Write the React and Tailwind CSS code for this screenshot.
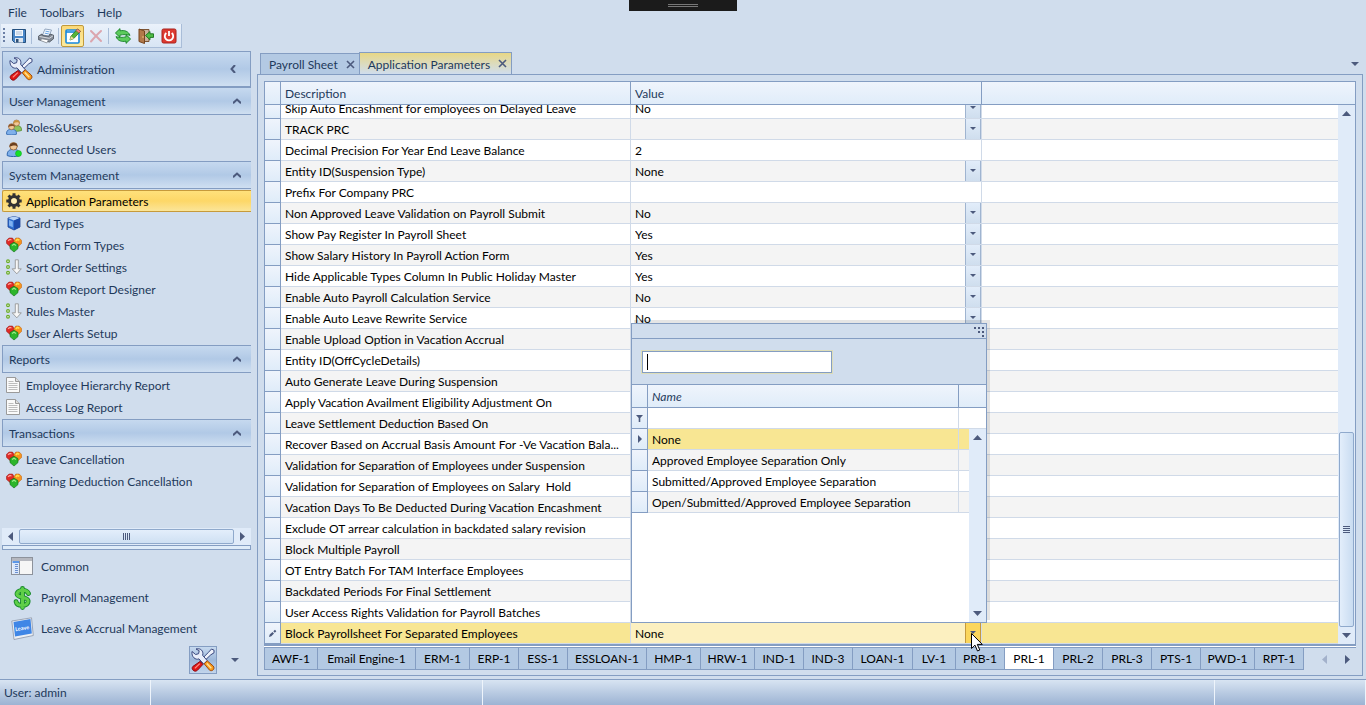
import React, { useState } from "react";

function Svg({ w = 16, h = 16, box, children, className = "" }) {
  return (
    <svg width={w} height={h} viewBox={box || `0 0 ${w} ${h}`} className={`shrink-0 ${className}`} aria-hidden="true">
      {children}
    </svg>
  );
}

const Down = ({ w = 6, h = 4, className = "" }) => (
  <Svg w={w} h={h} className={className}>
    <path d={`M0 0H${w}L${w / 2} ${h}Z`} fill="#4c5a7d" />
  </Svg>
);
const Up = () => (
  <Svg w={9} h={5}>
    <path d="M0 5H9L4.500 0Z" fill="#4c5a7d" />
  </Svg>
);
const Side = ({ left, faded }) => (
  <Svg w={5} h={9}>
    <path d={left ? "M5 0V9L0 4.5Z" : "M0 0V9L5 4.5Z"} fill={faded ? "#a3b1cb" : "#4c5a7d"} />
  </Svg>
);

const ToolsIcon = () => (
  <Svg w={24} h={24}>
    <path d="M20.500 1l2.500 1.200v2.600l-3.200 2L11 15.200 8.800 13l8.600-8.600z" fill="#eef2fb" stroke="#39477e" />
    <path d="M1 3.500l3.600 3 3-.8.6-3L5 1c3.500-1 6.800.8 6.900 4.500l-.2 1.900 4.500 5.200-3.500 3.400-4.700-5.100C4.500 12.300.3 9 1 3.500z" fill="#e9eefa" stroke="#39477e" />
    <path d="M13.200 15.800l3-3 6 5.200c2.200 2.500-.8 6-3.600 4.200z" fill="#f89c1c" stroke="#a24a0c" />
    <path d="M15.800 15.500l4.500 4.700" stroke="#ffe29a" strokeWidth="1.500" />
    <path d="M9 13.500l3 2.800-5.600 6C3.500 24.800-.3 21.200 1.800 18.500z" fill="#e01515" stroke="#8c0c12" />
    <path d="M8.800 15.600l-5 4.800" stroke="#ff8f85" strokeWidth="1.300" />
  </Svg>
);
const SaveIcon = () => (
  <Svg>
    <path d="M1.500 1.500h13v13h-11l-2-2z" fill="#4a87c8" stroke="#24507f" />
    <rect x="4" y="2" width="8" height="6" fill="#f4f8fd" />
    <path d="M5 4h6M5 6h6" stroke="#a9bed6" />
    <rect x="4" y="10" width="8" height="4.500" fill="#dfe6ee" />
    <rect x="5" y="11" width="2.500" height="3.500" fill="#2d5078" />
  </Svg>
);
const PrintIcon = () => (
  <Svg>
    <path d="M7 1l6.500 1L11 8 4.500 7z" fill="#f3f8ff" stroke="#7d93ae" strokeWidth=".8" />
    <path d="M7.500 3.200l4 .7M6.800 5.200l4 .7" stroke="#6aa5e2" />
    <path d="M.6 8L4 6l.8 1.600 6 .8L12 6l3.500 1.200v3.600L11.500 14 .6 11.800z" fill="#858c97" stroke="#454c56" strokeWidth=".8" />
    <path d="M1.500 8.500l9.800 1.800L15 7.800" fill="none" stroke="#d5d9df" />
    <path d="M2 12.300l2-1.500 6.500 1.100-1.700 3z" fill="#fff" stroke="#707883" strokeWidth=".7" />
  </Svg>
);
const EditIcon = () => (
  <Svg>
    <rect x="1" y="2" width="13" height="13" rx="1" fill="#fff" stroke="#1788dd" strokeWidth="1.600" />
    <path d="M1 4h13" stroke="#1788dd" strokeWidth="1.600" />
    <path d="M12.500 1l3 2.300-6.700 7.200-3.800 1.500 1-3.800z" fill="#57b53a" stroke="#2c7a20" strokeWidth=".8" />
    <path d="M12.500 1l3 2.300-1.500 1.700-3-2.400z" fill="#f08b85" stroke="#b84b42" strokeWidth=".6" />
    <path d="M6 8.200L9 10.500 5 12z" fill="#f4d79c" />
  </Svg>
);
const CloseIcon = () => (
  <Svg>
    <path d="M3 3c3 3 6 6 10 10M13 3C9 6.500 6 10 3 13.500" stroke="#dba5ae" strokeWidth="2" fill="none" strokeLinecap="round" />
  </Svg>
);
const RefreshIcon = () => (
  <Svg>
    <path d="M.4 5L5 .6v2.200c4.500-.9 8.500.5 10 4.600-1.500-.7-3-.8-4.500-.8-2 0-3.500.1-5.500.5V9.400z" fill="#5ccb5c" stroke="#168127" strokeWidth=".9" strokeLinejoin="round" />
    <path d="M15.600 11L11 15.400v-2.200C6.500 14.100 2.500 12.700 1 8.600c1.500.7 3 .8 4.500.8 2 0 3.500-.1 5.500-.5V6.600z" fill="#5ccb5c" stroke="#168127" strokeWidth=".9" strokeLinejoin="round" />
  </Svg>
);
const ExitIcon = () => (
  <Svg>
    <path d="M1 1.500h10v12H7" fill="#c9b19a" stroke="#7c5434" />
    <path d="M1 1l5.500 2v12.500L1 13.500z" fill="#b27849" stroke="#75451f" />
    <circle cx="5" cy="9" r=".7" fill="#ffdf8e" />
    <path d="M7.500 7.500l4.500-4v2.300h3.500v3.600H12v2.400z" fill="#4fbd45" stroke="#18701c" strokeWidth=".9" />
  </Svg>
);
const PowerIcon = () => (
  <Svg>
    <rect x="1" y="1" width="14" height="14" rx="1.500" fill="#dd3a31" stroke="#a9211c" />
    <path d="M5.300 5a4.200 4.200 0 1 0 5.400 0" stroke="#fff" strokeWidth="1.800" fill="none" />
    <path d="M8 3v5" stroke="#fff" strokeWidth="1.800" />
  </Svg>
);

const Person = ({ x, y, shirt, edge, hair }) => (
  <g transform={`translate(${x} ${y})`}>
    <path d="M0 11c-.3-3.500 1.500-5 5-5s5.300 1.500 5 5c-3 1-7 1-10 0z" fill={shirt} stroke={edge} strokeWidth=".8" />
    <circle cx="5" cy="3.500" r="3" fill="#f1c898" stroke="#8b5a2b" strokeWidth=".6" />
    <path d="M1.800 4C1.300 0 8.700-.8 8.200 4 7 2.300 4 2.600 1.800 4z" fill={hair} />
  </g>
);
const UsersIcon = () => (
  <Svg>
    <Person x={5.500} y={0.500} shirt="#8fc35c" edge="#51892b" hair="#c9923a" />
    <Person x={0.500} y={4.200} shirt="#7fb0ea" edge="#2c65ad" hair="#8a5129" />
  </Svg>
);
const ConnectedIcon = () => (
  <Svg>
    <g transform="scale(1.250)">
      <Person x={1} y={0.700} shirt="#7fb0ea" edge="#2c65ad" hair="#6b3f1e" />
    </g>
    <circle cx="12.500" cy="12.500" r="3" fill="#14e028" stroke="#0ba51b" strokeWidth=".5" />
  </Svg>
);
const GearIcon = () => (
  <Svg>
    <g fill="none" stroke="#333">
      <circle cx="8" cy="8" r="4.400" strokeWidth="3.200" />
      <path d="M8 .3v3M8 12.700v3M.3 8h3M12.700 8h3M2.500 2.500l2.300 2.300M11.200 11.200l2.300 2.300M13.500 2.500l-2.300 2.300M4.800 11.200l-2.300 2.300" strokeWidth="3" />
    </g>
    <circle cx="8" cy="8" r="2.800" fill="#fff0b8" />
  </Svg>
);
const CubeIcon = () => (
  <Svg>
    <path d="M8 1.500l6 1.500v9l-6 3-6-3V3z" fill="#2f6fd0" stroke="#1b3f93" strokeWidth=".8" />
    <path d="M2 3l6-1.500L14 3 8 5.500z" fill="#b9d4f6" />
    <path d="M8 5.500L14 3v9l-6 3z" fill="#1c49a8" />
    <path d="M3 5l3.800 1.600v5.600L3 10.500z" fill="#7fb0f0" />
  </Svg>
);
const GemsIcon = () => (
  <Svg>
    <path d="M.3 3.500L3 1h3.500L8.400 4l-1 4.500L4 9.500.6 6.500z" fill="#e02a26" stroke="#8f1512" strokeWidth=".5" />
    <path d="M15.700 3.500L13.200 1H9.800L7.800 4l1 4.500 3.500 1 3.200-3z" fill="#f7941d" stroke="#b85a08" strokeWidth=".5" />
    <path d="M4 7.600L8 5.200l4 2.400v4L8 15l-4-3.400z" fill="#2db52b" stroke="#0c6a12" strokeWidth=".6" />
    <path d="M2 3.700l2-1.300 1.500.6" stroke="#ffa59d" strokeWidth="1.200" fill="none" />
    <path d="M9.800 4l1.500-1.500 2 .7" stroke="#ffe04a" strokeWidth="1.600" fill="none" />
    <path d="M6 8.500l2-1.300 2 1.300" stroke="#9bed88" strokeWidth="1.200" fill="none" />
  </Svg>
);
const SortIcon = () => (
  <Svg>
    <g fill="#e7f5d8" stroke="#6bab2a" strokeWidth="1.200">
      <circle cx="2" cy="2.300" r="1.400" />
      <circle cx="2" cy="8" r="1.400" />
      <circle cx="2" cy="13.700" r="1.400" />
    </g>
    <path d="M9.300.8h3v9h3l-4.500 5-4.600-5h3.100z" fill="#f7f7f7" stroke="#8d8d8d" strokeWidth=".8" />
  </Svg>
);
const DocIcon = () => (
  <Svg>
    <path d="M.5.5h9l4 4v11H.5z" fill="#fafafa" stroke="#9a9a9a" />
    <path d="M9.500.5v4h4" fill="#ddd" stroke="#9a9a9a" />
    <path d="M2.500 4.500h5M2.500 6.500h9M2.500 8.500h9M2.500 10.500h9M2.500 12.500h9" stroke="#bdbdbd" />
  </Svg>
);
const CommonIcon = () => (
  <Svg w={24} h={24}>
    <rect x=".5" y="2.500" width="21" height="17" fill="#f6f6f6" stroke="#8d929b" />
    <rect x="1" y="3" width="20" height="3" fill="#b6b8bf" />
    <rect x="1.500" y="6.500" width="7" height="12.500" fill="#dbe8fb" />
    <path d="M1.500 7h7" stroke="#2f7be0" strokeWidth="1.500" />
    <path d="M4 9.500h3M4 11.500h3M4 13.500h3M4 15.500h3M4 17.500h3" stroke="#6b8fd0" />
    <path d="M8.500 6v13.500" stroke="#8d929b" />
  </Svg>
);
const DollarIcon = () => (
  <Svg w={24} h={24}>
    <g fill="none" strokeLinecap="round">
      <path d="M17.500 7.500c-1-2.500-3.500-3.300-6.200-3.200-3.200.1-5.700 2-5.200 4.300.6 3 10.500 2.500 11 6 .4 3.200-2.500 4.900-6 4.800-3 0-5.500-1.200-6-3.700M11.500 2.400v19.200" stroke="#178a2b" strokeWidth="4.800" />
      <path d="M17.500 7.500c-1-2.500-3.500-3.300-6.200-3.200-3.200.1-5.700 2-5.200 4.300.6 3 10.500 2.500 11 6 .4 3.200-2.500 4.900-6 4.800-3 0-5.500-1.200-6-3.700M11.500 2.400v19.200" stroke="#5fcf48" strokeWidth="3" />
    </g>
  </Svg>
);
const LeaveIcon = () => (
  <Svg w={24} h={24}>
    <path d="M.8 4L20.500.8l1.800 17.700L3 22.500z" fill="#eceff4" stroke="#8b96a8" strokeWidth=".8" />
    <path d="M2.500 5l17-3 1.300 14.500-16.800 3z" fill="#3f86e6" />
    <text x="4.200" y="13" fontSize="5.500" fontWeight="700" fill="#fff" fontFamily="Lato, sans-serif" transform="rotate(-9 12 12)">Leave</text>
  </Svg>
);

const sections = [
  ["User Management", [[UsersIcon, "Roles&Users"], [ConnectedIcon, "Connected Users"]]],
  ["System Management", [
    [GearIcon, "Application Parameters"],
    [CubeIcon, "Card Types"],
    [GemsIcon, "Action Form Types"],
    [SortIcon, "Sort Order Settings"],
    [GemsIcon, "Custom Report Designer"],
    [SortIcon, "Rules Master"],
    [GemsIcon, "User Alerts Setup"],
  ]],
  ["Reports", [[DocIcon, "Employee Hierarchy Report"], [DocIcon, "Access Log Report"]]],
  ["Transactions", [[GemsIcon, "Leave Cancellation"], [GemsIcon, "Earning Deduction Cancellation"]]],
];

const rows = [
  ["Skip Auto Encashment for employees on Delayed Leave", "No", "list"],
  ["TRACK PRC", "", "list"],
  ["Decimal Precision For Year End Leave Balance", "2", "text"],
  ["Entity ID(Suspension Type)", "None", "list"],
  ["Prefix For Company PRC", "", "text"],
  ["Non Approved Leave Validation on Payroll Submit", "No", "list"],
  ["Show Pay Register In Payroll Sheet", "Yes", "list"],
  ["Show Salary History In Payroll Action Form", "Yes", "list"],
  ["Hide Applicable Types Column In Public Holiday Master", "Yes", "list"],
  ["Enable Auto Payroll Calculation Service", "No", "list"],
  ["Enable Auto Leave Rewrite Service", "No", "list"],
  ["Enable Upload Option in Vacation Accrual"],
  ["Entity ID(OffCycleDetails)"],
  ["Auto Generate Leave During Suspension"],
  ["Apply Vacation Availment Eligibility Adjustment On"],
  ["Leave Settlement Deduction Based On"],
  ["Recover Based on Accrual Basis Amount For -Ve Vacation Bala..."],
  ["Validation for Separation of Employees under Suspension"],
  ["Validation for Separation of Employees on Salary\u00a0 Hold"],
  ["Vacation Days To Be Deducted During Vacation Encashment"],
  ["Exclude OT arrear calculation in backdated salary revision"],
  ["Block Multiple Payroll"],
  ["OT Entry Batch For TAM Interface Employees"],
  ["Backdated Periods For Final Settlement"],
  ["User Access Rights Validation for Payroll Batches"],
  ["Block Payrollsheet For Separated Employees", "None", "list"],
];

const choices = ["None", "Approved Employee Separation Only", "Submitted/Approved Employee Separation", "Open/Submitted/Approved Employee Separation"];

const narrow = "w-[49px]";
const medium = "w-[54px]";
const sheets = [
  ["AWF-1", medium],
  ["Email Engine-1", "w-[98px]"],
  ["ERM-1", medium],
  ["ERP-1", narrow],
  ["ESS-1", narrow],
  ["ESSLOAN-1", "w-[79px]"],
  ["HMP-1", medium],
  ["HRW-1", medium],
  ["IND-1", narrow],
  ["IND-3", narrow],
  ["LOAN-1", "w-[60px]"],
  ["LV-1", "w-[43px]"],
  ["PRB-1", narrow],
  ["PRL-1", narrow],
  ["PRL-2", narrow],
  ["PRL-3", narrow],
  ["PTS-1", narrow],
  ["PWD-1", medium],
  ["RPT-1", narrow],
];

const headGrad = "bg-linear-to-b from-[#eff4fc] to-[#dfecf9]";
const barGrad = "bg-linear-to-b from-[#c6d9ef] via-[#b1c9e6] to-[#cfdff1]";

function ToolButton({ label, on, children }) {
  return (
    <button
      aria-label={label}
      className={`flex h-[22px] w-[23px] items-center justify-center ${on ? "rounded-xs border border-[#c09a3c] bg-linear-to-b from-[#fbd978] to-[#fdeb9e]" : ""}`}
    >
      {children}
    </button>
  );
}
const ToolSep = () => <span className="mr-[2px] ml-px h-4 w-px bg-[#a9bdd8]" />;

function Sidebar() {
  return (
    <nav className="ml-[2px] flex w-[249px] shrink-0 flex-col" aria-label="Modules">
      <div className={`mt-[3px] flex h-9 items-center border border-[#849dc2] pr-[14px] pl-[6px] ${barGrad}`}>
        <ToolsIcon />
        <span className="ml-1 grow pt-[2px]">Administration</span>
        <button aria-label="Collapse">
          <Svg w={6} h={8}>
            <path d="M5 0L1.500 4 5 8" fill="none" stroke="#4c5a7d" strokeWidth="2" />
          </Svg>
        </button>
      </div>
      {sections.map(([title, items]) => (
        <section key={title} className="pb-px">
          <button className={`mb-px flex h-7 w-full items-center justify-between border-y border-l border-[#849dc2] pr-[10px] pl-[6px] text-left ${barGrad}`}>
            <span className="pt-[2px]">{title}</span>
            <Svg w={8} h={6}>
              <path d="M0 5.200L4 1.500 8 5.200" fill="none" stroke="#4c5a7d" strokeWidth="2" />
            </Svg>
          </button>
          {items.map(([Icon, text]) => (
            <a
              key={text}
              href="#"
              className={`flex h-[22px] items-center gap-1 border-y border-l pl-[3px] ${
                text === "Application Parameters"
                  ? "rounded-l-xs border-[#c69a3b] bg-linear-to-b from-[#ffe17b] via-[#fdd767] to-[#fbe598] text-black"
                  : "border-transparent"
              }`}
            >
              <Icon />
              <span className="pt-[2px]">{text}</span>
            </a>
          ))}
        </section>
      ))}
      <div className="mt-auto flex h-[17px] items-center justify-between bg-[#e0ebf9] px-[6px]">
        <Side left />
        <div className="mx-[6px] flex h-[15px] grow items-center justify-center gap-px rounded-xs border border-[#8fa9cc] bg-linear-to-b from-[#e3eefb] to-[#cfe0f3]">
          {[0, 1, 2, 3].map((i) => (
            <span key={i} className="h-[7px] w-px bg-[#4c5a7d]" />
          ))}
        </div>
        <Side />
      </div>
      <div className="h-[5px] border border-[#849dc2] bg-[#dfecf9]" />
      {[[CommonIcon, "Common"], [DollarIcon, "Payroll Management"], [LeaveIcon, "Leave & Accrual Management"]].map(([Icon, text]) => (
        <a key={text} href="#" className="flex h-[31px] items-center gap-[6px] pt-[3px] pl-[9px]">
          <Icon />
          {text}
        </a>
      ))}
      <div className="mt-[3px] mb-[5px] flex h-7 items-center gap-[14px] pl-[187px]">
        <button aria-label="Administration" className="flex size-7 items-center justify-center border border-[#849dc2] bg-linear-to-b from-[#c6d9ef] via-[#9db8da] to-[#c2d5ec]">
          <ToolsIcon />
        </button>
        <button aria-label="Configure buttons">
          <Down w={8} h={4} />
        </button>
      </div>
    </nav>
  );
}

function ValueCell({ label, value, kind, active }) {
  if (!kind) return null;
  if (kind === "text") return <input aria-label={label} defaultValue={value} className="block h-full w-full bg-transparent pl-1 outline-none" />;
  return (
    <div className="grid h-full grid-cols-1">
      <select aria-label={label} defaultValue={value} className="col-start-1 row-start-1 h-full appearance-none bg-transparent pt-[2px] pl-1 outline-none">
        <option>{value}</option>
      </select>
      <span
        className={`pointer-events-none col-start-1 row-start-1 flex w-4 items-center justify-center justify-self-end border-x ${
          active ? "border-[#c69a3b] bg-[#fbd65c]" : "border-[#9fb4d0] bg-linear-to-b from-[#e2edfa] to-[#cfdeee]"
        }`}
      >
        <Down w={6} h={3} className="mb-[2px]" />
      </span>
    </div>
  );
}

function Popup() {
  const cell = "border-r border-b border-[#d0dae8] pt-[2px] pl-1 font-normal";
  const ind = `border-r border-b border-[#849dc2] ${headGrad}`;
  return (
    <div className="absolute bottom-[21px] left-[366px] flex h-[300px] w-[356px] flex-col border border-[#849dc2] bg-white text-black shadow-[3px_-3px_0_rgba(0,0,0,0.1)]">
      <div className="flex h-[15px] shrink-0 justify-end border-b border-[#849dc2] bg-[#d0dded] pt-[3px] pr-[2px]">
        <Svg w={10} h={10}>
          <path d="M0 0h2v2H0zM4 0h2v2H4zM8 0h2v2H8zM4 4h2v2H4zM8 4h2v2H8zM8 8h2v2H8z" fill="#4c5a7d" />
        </Svg>
      </div>
      <div className="flex h-[46px] shrink-0 items-center border-b border-[#849dc2] bg-[#d0dded] pl-[10px]">
        <div className="flex h-[22px] w-[190px] items-center border border-[#849dc2] bg-white px-1 outline-1 outline-[#ddddb8]">
          <span className="h-4 w-px bg-black" />
          <input aria-label="Search" className="h-full min-w-0 grow outline-none" />
        </div>
      </div>
      <table className="w-full table-fixed border-separate border-spacing-0">
        <colgroup>
          <col className="w-4" />
          <col />
          <col className="w-[27px]" />
        </colgroup>
        <thead>
          <tr className={`h-[23px] text-left text-[#1e395b] italic ${headGrad}`}>
            <th className="border-r border-b border-[#849dc2]" />
            <th className="border-r border-b border-[#849dc2] pt-[2px] pl-1 font-normal">Name</th>
            <th className="border-b border-[#849dc2]" />
          </tr>
        </thead>
        <tbody>
          <tr className="h-[21px]">
            <td className={ind}>
              <Svg w={7} h={7} className="mx-auto">
                <path d="M0 0h7L4.300 3v4H2.700V3z" fill="#4c5a7d" />
              </Svg>
            </td>
            <td className={cell} />
            <td className="border-b border-[#d0dae8]" />
          </tr>
        </tbody>
      </table>
      <div className="flex grow">
        <div className="min-w-0 grow">
          <table className="w-full table-fixed border-separate border-spacing-0">
            <colgroup>
              <col className="w-4" />
              <col />
              <col className="w-[10px]" />
            </colgroup>
            <tbody>
              {choices.map((c, i) => (
                <tr key={c} className={`h-[21px] ${i === 0 ? "bg-[#f8e693]" : i % 2 ? "bg-[#f4f4f4]" : "bg-white"}`}>
                  <td className={ind}>
                    {i === 0 && (
                      <Svg w={4} h={8} className="mx-auto">
                        <path d="M0 0v8l4-4z" fill="#4c5a7d" />
                      </Svg>
                    )}
                  </td>
                  <td className={cell}>{c}</td>
                  <td className="border-b border-[#d0dae8]" />
                </tr>
              ))}
            </tbody>
          </table>
        </div>
        <div className="flex w-[17px] shrink-0 flex-col items-center justify-between bg-[#e0ebf9] py-[6px]">
          <Up />
          <Down w={9} h={5} />
        </div>
      </div>
    </div>
  );
}

function ParameterGrid() {
  return (
    <div className="relative border-x border-t border-b-2 border-[#849dc2] bg-white text-black">
      <table className="w-full table-fixed border-separate border-spacing-0">
        <colgroup>
          <col className="w-4" />
          <col className="w-[350px]" />
          <col className="w-[351px]" />
          <col />
          <col className="w-[17px]" />
        </colgroup>
        <thead>
          <tr className={`h-[23px] text-left text-[#1e395b] ${headGrad}`}>
            <th className="border-r border-b border-[#849dc2]" />
            <th className="border-r border-b border-[#849dc2] pt-[2px] pl-1 font-normal">Description</th>
            <th className="border-r border-b border-[#849dc2] pt-[2px] pl-1 font-normal">Value</th>
            <th colSpan={2} className="border-b border-[#849dc2]" />
          </tr>
        </thead>
        <tbody>
          {rows.map(([name, value, kind], i) => {
            const first = i === 0;
            const last = i === rows.length - 1;
            const h = first ? "h-[13px]" : "h-5";
            const line = "border-b border-[#d0dae8]";
            return (
              <tr key={name} className={last ? "bg-[#f8e693]" : i % 2 ? "bg-[#f4f4f4]" : "bg-white"}>
                <td className={`border-r border-b border-[#849dc2] ${headGrad}`}>
                  {last && (
                    <Svg w={9} h={9} className="mx-auto">
                      <path d="M1 8l.7-2.500L4.500 3 6 4.600 3.300 7.300zM5.300 2.300L7 .8l1.300 1.400L6.800 3.800z" fill="#4c5a7d" />
                    </Svg>
                  )}
                </td>
                <td className={`border-r ${line}`}>
                  <div className={`flex items-end overflow-hidden ${h}`}>
                    <span className="h-5 pl-1 leading-[22px] whitespace-nowrap">{name}</span>
                  </div>
                </td>
                <td className={`border-r ${line} ${last ? "bg-[#fcf0c0]" : ""}`}>
                  <div className={`flex flex-col justify-end overflow-hidden ${h}`}>
                    <div className="h-5 shrink-0">
                      <ValueCell label={name} value={value} kind={kind} active={last} />
                    </div>
                  </div>
                </td>
                <td className={line} />
                <td />
              </tr>
            );
          })}
        </tbody>
      </table>
      <div className="absolute top-[23px] right-0 bottom-0 flex w-[17px] flex-col items-center bg-[#e0ebf9] py-[6px]">
        <Up />
        <div className="mt-auto mb-[6px] flex h-[195px] w-[15px] flex-col items-center justify-center gap-px rounded-xs border border-[#8fa9cc] bg-linear-to-r from-[#e3eefb] to-[#c9dcf1]">
          {[0, 1, 2, 3].map((i) => (
            <span key={i} className="h-px w-[7px] bg-[#4c5a7d]" />
          ))}
        </div>
        <Down w={9} h={5} />
      </div>
      <Popup />
      <Svg w={12} h={19} className="absolute -bottom-2 left-[706px]">
        <path d="M.5.5v15l3.500-3.300 2.500 5.800 2.300-1-2.500-5.600h5z" fill="#fff" stroke="#000" />
      </Svg>
    </div>
  );
}

function DocTab({ text, active }) {
  return (
    <div
      role="tab"
      aria-selected={active}
      className={`flex items-center gap-2 border border-b-0 border-[#849dc2] pr-1 pl-2 ${
        active ? "-ml-px h-[22px] bg-linear-to-b from-[#e8d784] to-[#d0dded]" : "h-[21px] bg-[#b3c9e3]"
      }`}
    >
      <span className="pt-[2px]">{text}</span>
      <button aria-label={`Close ${text}`}>
        <Svg w={9} h={9}>
          <path d="M1 1l7 7M8 1L1 8" stroke="#4c5a7d" strokeWidth="1.600" />
        </Svg>
      </button>
    </div>
  );
}

export default function App() {
  const [sheet, setSheet] = useState("PRL-1");
  return (
    <div className="relative flex min-h-screen flex-col bg-[#d0dded] font-['Lato','Open_Sans',sans-serif] text-[12px] leading-4 text-[#1e395b]">
      <div className="absolute top-0 left-[629px] flex h-[11px] w-[108px] flex-col items-center justify-center gap-px bg-[#1b1b1b]">
        <span className="h-px w-[30px] bg-[#777]" />
        <span className="h-px w-[30px] bg-[#777]" />
      </div>
      <div className="flex h-6 items-center gap-[13px] pt-[2px] pl-2">
        {["File", "Toolbars", "Help"].map((m) => (
          <button key={m}>{m}</button>
        ))}
      </div>
      <div className="ml-px flex h-6 w-[181px] items-center border-r border-b border-[#a9bdd8] bg-linear-to-b from-[#ebf2fb] to-[#d8e5f4]">
        <Svg w={3} h={16} className="mr-px ml-[2px]">
          <path d="M0 0h2v2H0zM0 4h2v2H0zM0 8h2v2H0zM0 12h2v2H0z" fill="#6b7fa5" />
        </Svg>
        <ToolButton label="Save"><SaveIcon /></ToolButton>
        <ToolSep />
        <ToolButton label="Print"><PrintIcon /></ToolButton>
        <ToolSep />
        <ToolButton label="Edit" on><EditIcon /></ToolButton>
        <ToolButton label="Delete"><CloseIcon /></ToolButton>
        <ToolSep />
        <ToolButton label="Refresh"><RefreshIcon /></ToolButton>
        <ToolButton label="Close window"><ExitIcon /></ToolButton>
        <ToolButton label="Exit"><PowerIcon /></ToolButton>
      </div>
      <div className="flex grow">
        <Sidebar />
        <main className="mr-[3px] ml-[6px] flex min-w-0 grow flex-col pt-1">
          <div className="flex items-end pr-1 pl-[3px]" role="tablist">
            <DocTab text="Payroll Sheet" />
            <DocTab text="Application Parameters" active />
            <button aria-label="Window list" className="mb-2 ml-auto">
              <Down w={8} h={4} />
            </button>
          </div>
          <div className="mb-[3px] grow border border-[#849dc2] px-[6px] pt-[6px] pb-[5px]">
            <ParameterGrid />
            <div className="border-t border-white" />
            <div className="flex h-[23px] items-stretch border-t border-[#849dc2] text-black">
              {sheets.map(([s, width]) => (
                <button
                  key={s}
                  onClick={() => setSheet(s)}
                  className={`shrink-0 border-r border-b border-[#849dc2] text-center whitespace-nowrap first:border-l ${width} ${s === sheet ? "bg-white" : "bg-[#b3c9e3]"}`}
                >
                  {s}
                </button>
              ))}
              <div className="ml-auto flex items-center gap-[18px] pr-[6px]">
                <button aria-label="Previous sheets"><Side left faded /></button>
                <button aria-label="Next sheets"><Side /></button>
              </div>
            </div>
          </div>
        </main>
      </div>
      <footer className="flex h-[26px] border-t border-[#849dc2] bg-linear-to-b from-[#d8e4f2] to-[#9cb3d3]">
        <span className="w-[151px] border-r border-[#eef4fb] pt-[5px] pl-1">User: admin</span>
        <span className="w-[332px] border-r border-[#eef4fb]" />
        <span className="grow border-r border-[#eef4fb]" />
        <span className="w-[151px] border-r border-[#eef4fb]" />
      </footer>
    </div>
  );
}
